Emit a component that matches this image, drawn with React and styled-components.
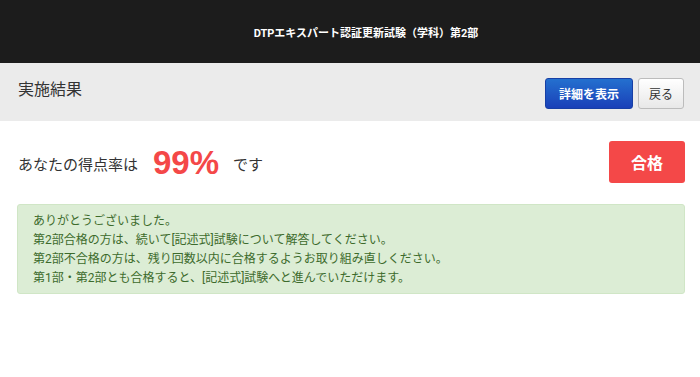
import React from "react";
import styled, { createGlobalStyle } from "styled-components";

const Global = createGlobalStyle`
  html, body { margin: 0; padding: 0; background: #fff; }
  body { font-family: Roboto, "Noto Sans CJK JP", sans-serif; }
`;

const Header = styled.header`
  height: 63px;
  background: #1c1c1c;
  display: flex;
  align-items: center;
  justify-content: center;
  padding-left: 32px;
  box-sizing: border-box;
`;

const Title = styled.h1`
  margin: 0;
  color: #fff;
  font-size: 11px;
  font-weight: 700;
`;

const Bar = styled.div`
  height: 58px;
  background: #ebebeb;
  display: flex;
  align-items: center;
  justify-content: space-between;
  padding: 0 16px 0 18px;
`;

const BarTitle = styled.h2`
  margin: 0 0 8px;
  font-size: 16px;
  font-weight: 400;
  color: #333;
`;

const Actions = styled.div`
  display: flex;
  gap: 5px;
  margin-top: 3px;
`;

const Button = styled.button`
  height: 31px;
  border-radius: 3px;
  font-family: inherit;
  font-size: 12px;
  padding: 0 ${(p) => (p.$primary ? "13px" : "10px")};
  cursor: pointer;
  ${(p) =>
    p.$primary
      ? `
    color: #fff;
    font-weight: 700;
    border: 1px solid #173fa5;
    background: linear-gradient(#2470cf, #1a40b8);
  `
      : `
    color: #333;
    border: 1px solid #bcbcbc;
    background: linear-gradient(#ffffff, #e8e8e8);
  `}
`;

const Main = styled.main`
  padding: 20px 15px 0 17px;
`;

const ScoreRow = styled.div`
  display: flex;
  align-items: center;
  justify-content: space-between;
`;

const ScoreText = styled.div`
  display: flex;
  align-items: center;
  font-size: 15px;
  color: #333;
  padding: 2px 0 0 1px;
`;

const Score = styled.span`
  color: #f44848;
  font-size: 33px;
  font-weight: 700;
  font-family: "Liberation Sans", Arial, sans-serif;
  margin: 0 14px 0 15px;
`;

const Badge = styled.div`
  width: 76px;
  height: 42px;
  background: #f44848;
  border-radius: 3px;
  color: #fff;
  font-weight: 700;
  font-size: 16px;
  display: flex;
  align-items: center;
  justify-content: center;
`;

const Notice = styled.div`
  margin-top: 21px;
  background: #dcedd5;
  border: 1px solid #d0e6c6;
  border-radius: 3px;
  padding: 7px 15px 5px;
  color: #3c6b2c;
  font-size: 12px;
  line-height: 19px;
`;

const Line = styled.p`
  margin: 0;
`;

export default function App() {
  return (
    <>
      <Global />
      <Header>
        <Title>DTPエキスパート認証更新試験（学科）第2部</Title>
      </Header>
      <Bar>
        <BarTitle>実施結果</BarTitle>
        <Actions>
          <Button $primary>詳細を表示</Button>
          <Button>戻る</Button>
        </Actions>
      </Bar>
      <Main>
        <ScoreRow>
          <ScoreText>
            あなたの得点率は<Score>99%</Score>です
          </ScoreText>
          <Badge>合格</Badge>
        </ScoreRow>
        <Notice>
          <Line>ありがとうございました。</Line>
          <Line>第2部合格の方は、続いて[記述式]試験について解答してください。</Line>
          <Line>第2部不合格の方は、残り回数以内に合格するようお取り組み直しください。</Line>
          <Line>第1部・第2部とも合格すると、[記述式]試験へと進んでいただけます。</Line>
        </Notice>
      </Main>
    </>
  );
}
